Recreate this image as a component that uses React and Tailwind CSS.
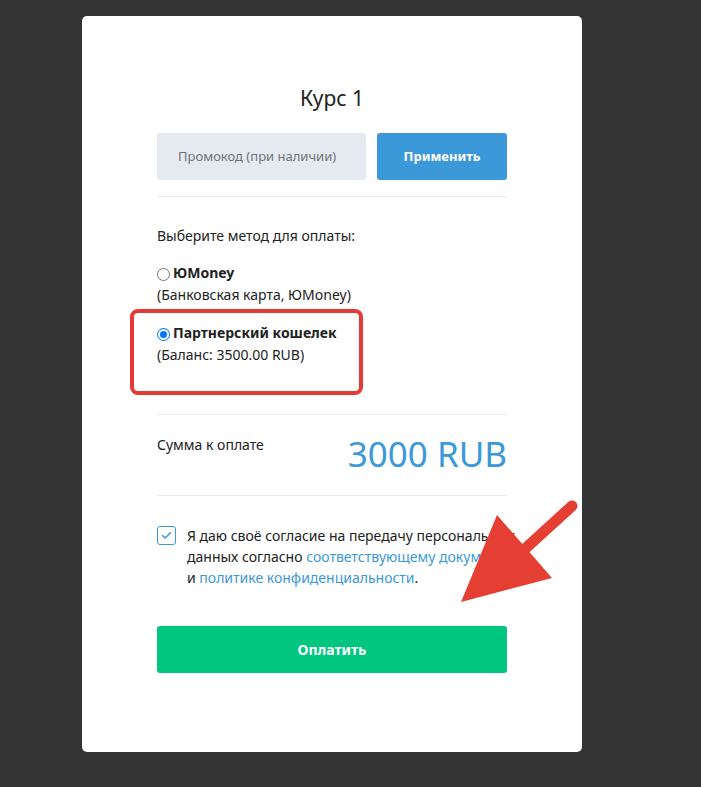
import React from "react";

function Radio({ checked }) {
  return checked ? (
    <span className="inline-block w-[13px] h-[13px] rounded-full bg-[#0075ff] relative top-[1px] shrink-0 p-[1px]">
      <span className="block w-full h-full rounded-full border-[2px] border-white bg-[#0075ff]" />
    </span>
  ) : (
    <span className="inline-block w-[13px] h-[13px] rounded-full border border-[#767676] bg-white relative top-[1px] shrink-0" />
  );
}

export default function App() {
  return (
    <div
      className="relative min-h-[787px] w-full bg-[#333333] pl-[82px] pt-[16px] text-[#222]"
      style={{ fontFamily: '"Noto Sans", "Open Sans", sans-serif' }}
    >
      <div className="w-[500px] h-[736px] bg-white rounded-[5px] px-[75px] pt-[66px]">
        <h1 className="text-center text-[21px] leading-[32px] text-[#222] mb-[19px]">Курс 1</h1>
        <div className="flex gap-[11px] h-[47px]">
          <div className="w-[209px] bg-[#e5e9f0] rounded-[3px] flex items-center pl-[21px] text-[13px] text-[#6f747c]">
            Промокод (при наличии)
          </div>
          <div className="flex-1 bg-[#3b99d9] rounded-[3px] flex items-center justify-center text-[13px] font-bold text-white">
            Применить
          </div>
        </div>
        <div className="mt-[16px] border-t border-[#e6ecf1]" />
        <div className="mt-[29px] text-[14px] leading-[20px]">Выберите метод для оплаты:</div>
        <div className="mt-[16px] text-[14px] leading-[22px]">
          <div className="flex items-center gap-[3px]">
            <Radio />
            <span className="font-bold">ЮMoney</span>
          </div>
          <div>(Банковская карта, ЮMoney)</div>
        </div>
        <div className="mt-[16px] text-[14px] leading-[22px]">
          <div className="flex items-center gap-[3px]">
            <Radio checked />
            <span className="font-bold">Партнерский кошелек</span>
          </div>
          <div>(Баланс: 3500.00 RUB)</div>
        </div>
        <div className="mt-[48px] border-t border-[#e6ecf1]" />
        <div className="mt-[19px] flex justify-between items-start">
          <div className="mt-[1px] text-[14px] leading-[20px]">Сумма к оплате</div>
          <div className="text-[35px] leading-[40px] text-[#3b99d9]">3000 RUB</div>
        </div>
        <div className="mt-[21px] border-t border-[#e6ecf1]" />
        <div className="mt-[29px] flex gap-[11px]">
          <div className="w-[19px] h-[19px] shrink-0 rounded-[3px] border-[1.5px] border-[#3b99d9] flex items-center justify-center mt-[1px]">
            <svg width="11" height="9" viewBox="0 0 11 9" fill="none">
              <path d="M1.5 4.5 L4.2 7 L9.5 1.8" stroke="#3b99d9" strokeWidth="1.6" strokeLinecap="round" strokeLinejoin="round" />
            </svg>
          </div>
          <div className="text-[14px] leading-[21px] whitespace-nowrap">
            Я даю своё согласие на передачу персональных
            <br />
            данных согласно <span className="text-[#3b99d9]">соответствующему документу</span>
            <br />
            и <span className="text-[#3b99d9]">политике конфиденциальности</span>.
          </div>
        </div>
        <div className="mt-[38px] h-[47px] bg-[#00c67f] rounded-[3px] flex items-center justify-center text-white font-bold text-[14px]">
          Оплатить
        </div>
      </div>

      <div className="absolute left-[130px] top-[309px] w-[233px] h-[86px] border-[4px] border-[#e53935] rounded-[8px] pointer-events-none" />

      <svg className="absolute left-0 top-0 pointer-events-none" width="701" height="787" viewBox="0 0 701 787">
        <line x1="572" y1="506" x2="515" y2="558" stroke="#e53e33" strokeWidth="11" strokeLinecap="round" />
        <polygon points="497,515 552,578 461,602" fill="#e53e33" />
      </svg>
    </div>
  );
}
